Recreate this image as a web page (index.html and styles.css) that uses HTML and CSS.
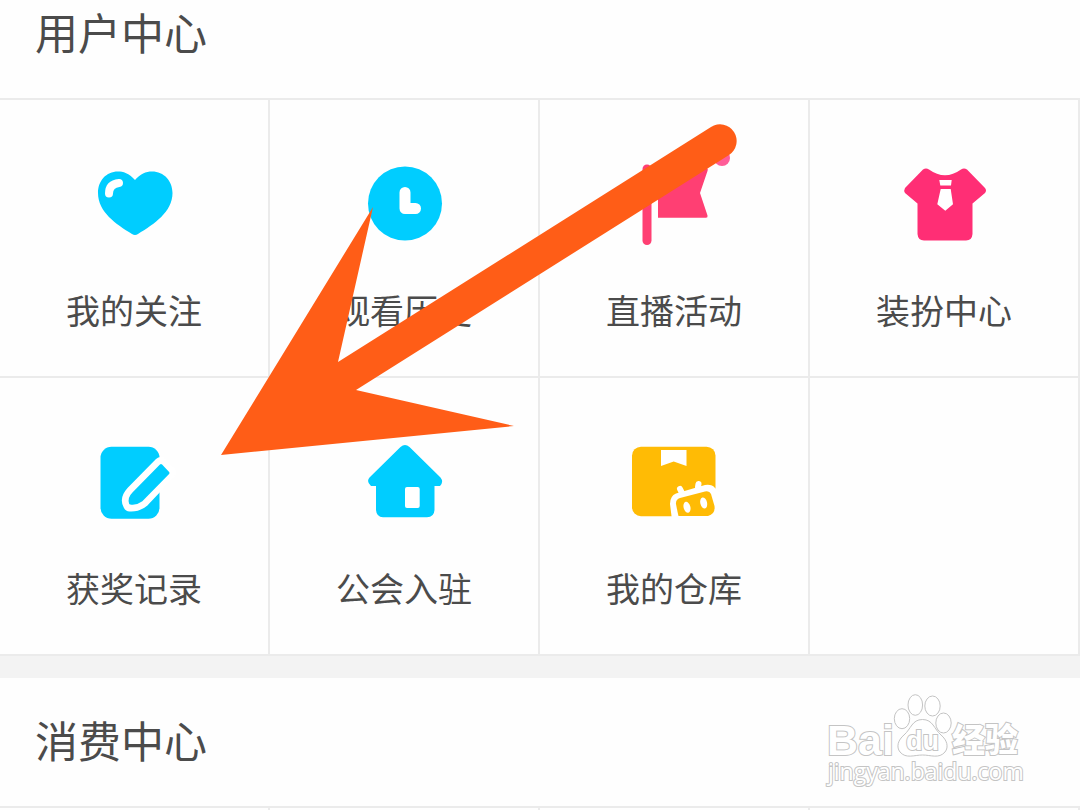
FILE: index.html
```html
<!DOCTYPE html>
<html lang="zh-CN">
<head>
    <meta charset="UTF-8">
    <meta name="viewport" content="width=device-width, initial-scale=1.0">
    <title>用户中心</title>
    <link rel="stylesheet" href="styles.css">
</head>
<body>
    <section class="panel panel-first">
        <h2>用户中心</h2>
        <nav class="grid">
            <a class="tile" href="#follow">
                <svg class="icon" viewBox="0 0 90 90">
                    <path fill="#00cdff" d="M46 22C40 15 34 13.500 29 13.500C17 13.500 9 23 9 35C9 54 27 66 43 76Q46 78 49 76C65 66 83.500 54 83.500 35C83.500 23 75 13.500 63 13.500C57 13.500 51 16 46 22Z"/>
                    <path fill="none" stroke="#fff" stroke-width="8" stroke-linecap="round" d="M20 35.500Q20 26 30 25"/>
                </svg>
                <span>我的关注</span>
            </a>
            <a class="tile" href="#history">
                <svg class="icon" viewBox="0 0 90 90">
                    <circle cx="46" cy="45.500" r="37" fill="#00cdff"/>
                    <path fill="none" stroke="#fff" stroke-width="11" stroke-linecap="round" stroke-linejoin="round" d="M46 34.500V50.500H56.500"/>
                </svg>
                <span>观看历史</span>
            </a>
            <a class="tile" href="#activity">
                <svg class="icon" viewBox="0 0 90 90">
                    <rect x="13.500" y="6.500" width="9" height="80.500" rx="4.500" fill="#ff3f73"/>
                    <path fill="#ff3f73" d="M29 10H77Q79.500 10 78.500 13L71 35L78.500 57.500Q79 59.700 77 59.700H29Z"/>
                    <circle cx="93" cy="0" r="8" fill="#ff5d98"/>
                </svg>
                <span>直播活动</span>
            </a>
            <a class="tile" href="#dress">
                <svg class="icon" viewBox="0 0 90 90">
                    <path fill="#ff2e75" d="M24 11.500Q27 9.500 30 11.500Q46 23 62 11.500Q65 9.500 68 11.500L86 30Q88 32.500 86 35L73.500 45.500V76Q73 82.500 67 82.500H25Q19 82.500 18.500 76V45.500L6 35Q4.500 32.500 6 30Z"/>
                    <path fill="#fff" d="M40.300 22H52.700L52 27.500H41.300ZM41.700 31H51.700L54 46.300L46.300 52.700L38.300 46.300Z"/>
                </svg>
                <span>装扮中心</span>
            </a>
            <a class="tile" href="#awards">
                <svg class="icon" viewBox="0 0 90 90">
                    <rect x="11.500" y="10.700" width="59" height="72" rx="11" fill="#00cdff"/>
                    <path fill="#fff" stroke="#fff" stroke-width="14" stroke-linejoin="round" d="M72 28L80 36.500L54 64Q48 69 41 68.500Q38 63 43.500 57Z"/>
                    <path fill="#00cdff" stroke="#00cdff" stroke-width="3" stroke-linejoin="round" d="M72 29.500L79 37L52.500 64Q47 68 41.500 67Q40 62 44.500 57.500Z"/>
                </svg>
                <span>获奖记录</span>
            </a>
            <a class="tile" href="#guild">
                <svg class="icon" viewBox="0 0 90 90">
                    <path fill="#00cdff" d="M41.500 11Q46 7 50.500 11L81.500 41.500Q85 46 81 50H75.500V74Q75 81.300 68 81.300H24Q17.500 81 17 74V50H12Q7 46 10.500 41.500Z"/>
                    <rect x="46" y="51" width="14.700" height="21" rx="2" fill="#fff"/>
                </svg>
                <span>公会入驻</span>
            </a>
            <a class="tile" href="#warehouse">
                <svg class="icon" viewBox="0 0 90 90">
                    <rect x="3" y="10.700" width="83.500" height="69.500" rx="9" fill="#ffbb05"/>
                    <path fill="#fff" d="M32 14H57.500V30L44.700 25.500L32 30Z"/>
                    <path fill="none" stroke="#fff" stroke-width="6" stroke-linecap="round" d="M51 53L53 57M69.500 48L69 51"/>
                    <path fill="#fff" d="M43 84L41 68Q41 60 47 57.500L76 49Q83 48 86 52L91 56V84Z"/>
                    <path fill="#ffbb05" d="M47 68Q46.500 63.500 51 62L76 55.500Q80.500 54.500 82 58L85.500 70Q86.500 78 79 80H49.500Q48.500 76 47 68Z"/>
                    <ellipse cx="58" cy="71.300" rx="3.400" ry="5.600" fill="#fff" transform="rotate(-14 58 71.300)"/>
                    <ellipse cx="74.700" cy="67" rx="3.400" ry="5.600" fill="#fff" transform="rotate(-14 74.700 67)"/>
                </svg>
                <span>我的仓库</span>
            </a>
            <div class="tile"></div>
        </nav>
    </section>

    <section class="panel">
        <h2>消费中心</h2>
        <div class="grid">
            <div class="tile"></div>
            <div class="tile"></div>
            <div class="tile"></div>
            <div class="tile"></div>
        </div>
    </section>

    <!-- pointer to the awards tile -->
    <svg class="arrow" viewBox="220 120 300 340">
        <path fill="#ff5d17" d="M221 455L373 207L338 362L711 127A16.500 16.500 0 0 1 729 155L356 390L514 426Z"/>
    </svg>

    <svg class="watermark" viewBox="0 0 210 100">
        <g class="mark">
            <text class="brand" x="7" y="65">Bai</text>
            <ellipse cx="82" cy="28.700" rx="7.700" ry="10"/>
            <ellipse cx="95.300" cy="15" rx="7.300" ry="10.300"/>
            <ellipse cx="112.500" cy="16" rx="7.700" ry="10"/>
            <ellipse cx="123.500" cy="33" rx="7.700" ry="10"/>
            <path d="M102.500 29.500C113 29.500 114 39 121 45C127 50 129 57 125 62C119 69 111 65 102.500 65C94 65 86 69 80 62C76 57 78 50 84 45C91 39 92 29.500 102.500 29.500Z"/>
            <text class="du" x="86" y="60">du</text>
            <text class="exp" x="132" y="62">经验</text>
            <text class="url" x="8" y="90">jingyan.baidu.com</text>
        </g>
    </svg>
</body>
</html>
```
FILE: styles.css
```css
* {
    box-sizing: border-box;
}
body {
    position: relative;
    margin: 0;
    height: 100vh;
    overflow: hidden;
    background-color: #fefefe;
    color: #4b4b4b;
    font-family: "Noto Sans CJK SC", sans-serif;
}
.panel {
    border-bottom: 22px solid #f3f3f3;
}
/* the page is scrolled a little past its top */
.panel-first {
    margin-top: -30px;
}
h2 {
    margin: 0;
    padding: 0 35px 6px;
    font-size: 43px;
    font-weight: 400;
    line-height: 122px;
}
.grid {
    display: grid;
    grid-template-columns: repeat(4, 1fr);
    border-top: 2px solid #ebebeb;
}
.tile {
    display: flex;
    flex-direction: column;
    align-items: center;
    min-height: 278px;
    padding: 58px 0 46px;
    border-right: 2px solid #ebebeb;
    border-bottom: 2px solid #ebebeb;
    color: inherit;
    font-size: 34px;
    line-height: 40px;
    text-decoration: none;
}
.icon {
    width: 90px;
    height: 90px;
    margin-bottom: 42px;
    overflow: visible;
}
.arrow {
    position: absolute;
    top: 120px;
    left: 220px;
    width: 300px;
    height: 340px;
    overflow: visible;
    pointer-events: none;
}
.watermark {
    position: absolute;
    right: 50px;
    bottom: 20px;
    width: 210px;
    height: 100px;
}
.mark {
    fill: #fff;
    stroke: #c4c4c4;
    stroke-width: 1;
}
.mark text {
    stroke-width: 2;
    paint-order: stroke;
}
.brand {
    font: 700 43px "Liberation Sans", sans-serif;
}
.du {
    font: 700 27px "Liberation Sans", sans-serif;
}
.exp {
    font: 900 33px "Noto Sans CJK SC", sans-serif;
}
.url {
    font: 400 23px "Open Sans", sans-serif;
}
```
